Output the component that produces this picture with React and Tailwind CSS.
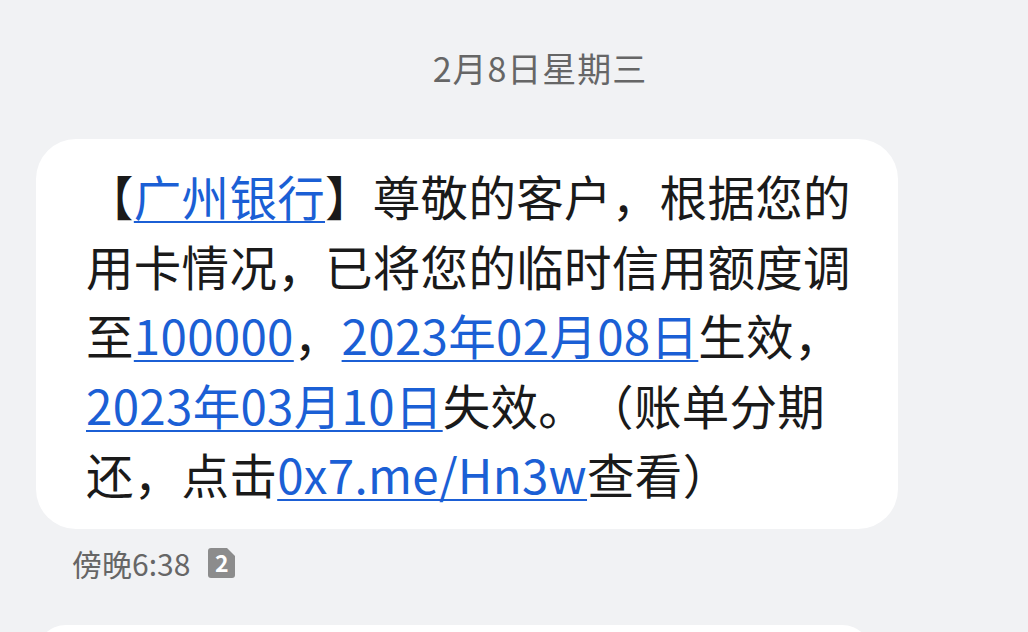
const FONT = { fontFamily: '"Noto Sans CJK SC", "Noto Sans", sans-serif' };

function Link({ children }) {
  return (
    <span className="text-[#1b5fd5] underline decoration-2 underline-offset-[5px]">{children}</span>
  );
}

// SIM card badge with the cut corner
function SimBadge({ n }) {
  return (
    <span className="relative inline-flex h-[30px] w-[27px] items-center justify-center">
      <svg width="27" height="30" viewBox="0 0 27 30" className="absolute inset-0">
        <path d="M3 0 H19 L27 8 V27 Q27 30 24 30 H3 Q0 30 0 27 V3 Q0 0 3 0 Z" fill="#8c8c8c" />
      </svg>
      <span className="relative text-[23px] font-bold leading-none text-white">{n}</span>
    </span>
  );
}

export default function App() {
  return (
    <div className="h-[632px] overflow-hidden bg-[#f1f2f4] [text-spacing-trim:space-all]" style={FONT}>
      {/* date header */}
      <div className="pl-[52px] pt-[48px] text-center text-[34px] leading-[40px] tracking-[1px] text-[#666666]">
        2月8日星期三
      </div>

      {/* message bubble */}
      <div className="ml-[36px] mt-[51px] w-[862px] rounded-[40px] bg-white pb-[20px] pl-[50px] pt-[22px]">
        <p className="text-[47.5px] leading-[69.5px] tracking-[0.3px] text-[#1a1a1a]">
          【<Link>广州银行</Link>】尊敬的客户，根据您的
          <br />
          用卡情况，已将您的临时信用额度调
          <br />
          至<Link>100000</Link>，<Link>2023年02月08日</Link>生效，
          <br />
          <Link>2023年03月10日</Link>失效。（账单分期
          <br />
          还，点击<Link>0x7.me/Hn3w</Link>查看）
        </p>
      </div>

      {/* time + sim */}
      <div className="mt-[16px] flex items-center gap-[18px] pl-[72px]">
        <span className="text-[30px] leading-[36px] text-[#666666]">傍晚6:38</span>
        <SimBadge n="2" />
      </div>

      {/* next bubble, cut off */}
      <div className="ml-[36px] mt-[44px] h-[60px] w-[836px] rounded-[40px] bg-white" />
    </div>
  );
}
